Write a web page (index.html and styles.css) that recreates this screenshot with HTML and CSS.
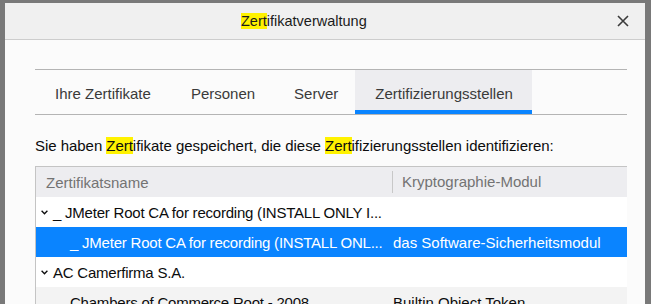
FILE: index.html
```html
<!DOCTYPE html>
<html lang="de">
<head>
    <meta charset="UTF-8">
    <meta name="viewport" content="width=device-width, initial-scale=1.0">
    <title>Zertifikatverwaltung</title>
    <link rel="stylesheet" href="styles.css">
</head>
<body>
    <div class="dialog">
        <div class="dialog-header">
            <span class="title"><mark>Zert</mark>ifikatverwaltung</span>
            <button class="close-btn" aria-label="Schließen">
                <svg width="12" height="12" viewBox="0 0 12 12">
                    <path d="M1 1 L11 11 M11 1 L1 11" stroke="#3b3b3b" stroke-width="1.6" fill="none"/>
                </svg>
            </button>
        </div>

        <div class="dialog-body">
            <div class="tabs">
                <div class="tab">Ihre Zertifikate</div>
                <div class="tab">Personen</div>
                <div class="tab">Server</div>
                <div class="tab selected">Zertifizierungsstellen</div>
            </div>

            <p class="intro">Sie haben <mark>Zert</mark>ifikate gespeichert, die diese <mark>Zert</mark>ifizierungsstellen identifizieren:</p>

            <div class="tree">
                <div class="tree-head">
                    <div class="col-name">Zertifikatsname</div>
                    <div class="col-module">Kryptographie-Modul</div>
                </div>
                <div class="tree-row">
                    <div class="col-name">
                        <svg class="twisty" width="7" height="5" viewBox="0 0 7 5">
                            <path d="M0.6 0.8 L3.5 3.8 L6.4 0.8" stroke="#0c0c0d" stroke-width="1.3" fill="none"/>
                        </svg>
                        <span>_ JMeter Root CA for recording (INSTALL ONLY I...</span>
                    </div>
                    <div class="col-module"></div>
                </div>
                <div class="tree-row child selected">
                    <div class="col-name"><span>_ JMeter Root CA for recording (INSTALL ONL...</span></div>
                    <div class="col-module">das Software-Sicherheitsmodul</div>
                </div>
                <div class="tree-row">
                    <div class="col-name">
                        <svg class="twisty" width="7" height="5" viewBox="0 0 7 5">
                            <path d="M0.6 0.8 L3.5 3.8 L6.4 0.8" stroke="#0c0c0d" stroke-width="1.3" fill="none"/>
                        </svg>
                        <span>AC Camerfirma S.A.</span>
                    </div>
                    <div class="col-module"></div>
                </div>
                <div class="tree-row child odd">
                    <div class="col-name"><span>Chambers of Commerce Root - 2008</span></div>
                    <div class="col-module">Builtin Object Token</div>
                </div>
            </div>
        </div>
    </div>
</body>
</html>
```

FILE: styles.css
```css
body {
    font-family: "Liberation Sans", Arial, sans-serif;
    font-size: 15px;
    background-color: #797979;
    margin: 0;
    padding: 3px 0 0 5px;
    height: 304px;
    box-sizing: border-box;
    overflow: hidden;
}

mark {
    background-color: #fff200;
    color: inherit;
}

.dialog {
    width: 640px;
    height: 301px;
    background-color: #fbfbfb;
    overflow: hidden;
}

.dialog-header {
    height: 36px;
    background-color: #f0f0f0;
    border-bottom: 1px solid #cdcdcd;
    display: flex;
    align-items: center;
    justify-content: space-between;
}

.title {
    padding-left: 236px;
    font-size: 14.5px;
    color: #1b1b1b;
    line-height: 19px;
}

.close-btn {
    width: 24px;
    height: 24px;
    margin-right: 10px;
    border: none;
    background: transparent;
    padding: 0;
    display: flex;
    align-items: center;
    justify-content: center;
}

.dialog-body {
    padding: 29px 18px 0 30px;
}

.tabs {
    width: 592px;
    display: flex;
    border-top: 1px solid #b4b4b4;
    border-bottom: 1px solid #b4b4b4;
}

.tab {
    padding: 15px 19px 8px 20px;
    line-height: 17px;
    color: #3a3a3a;
    border-bottom: 4px solid transparent;
}

.tab:nth-child(2) {
    padding-left: 21px;
}

.tab.selected {
    background-color: #ededf0;
    border-bottom-color: #0a84ff;
    margin-left: -2px;
}

.intro {
    margin: 21px 0 10px;
    line-height: 20px;
    color: #0c0c0d;
    letter-spacing: -0.04px;
}

.tree {
    width: 591px;
    border-top: 1px solid #c4c4c4;
    border-left: 1px solid #c4c4c4;
    background-color: #ffffff;
}

.tree-head {
    display: flex;
    height: 30px;
    background-color: #ededf0;
    color: #737373;
    align-items: center;
}

.tree-head .col-name {
    width: 346px;
    padding-left: 10px;
}

.tree-head .col-module {
    border-left: 1px solid #c8c8c8;
    padding-left: 9px;
    line-height: 22px;
}

.tree-row {
    display: flex;
    height: 30px;
    align-items: center;
    color: #0c0c0d;
}

.tree-row .col-name {
    width: 351px;
    padding-left: 5px;
    display: flex;
    align-items: center;
    white-space: nowrap;
    overflow: hidden;
    letter-spacing: -0.22px;
}

.tree-row.child .col-name {
    width: 322px;
    padding-left: 34px;
}

.tree-row .col-module {
    padding-left: 1px;
    white-space: nowrap;
}

.twisty {
    margin-right: 5px;
    flex-shrink: 0;
}

.tree-row.selected {
    background-color: #0a84ff;
    color: #ffffff;
}

.tree-row.odd {
    background-color: #f3f3f3;
}
```
